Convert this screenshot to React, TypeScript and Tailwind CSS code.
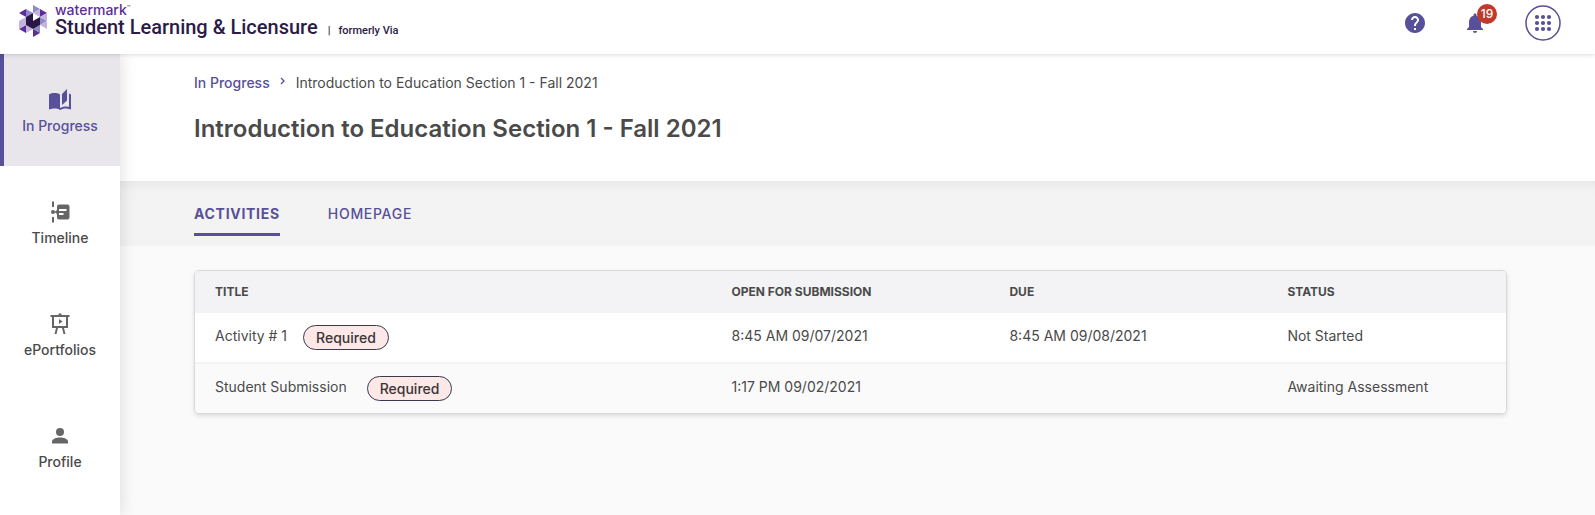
import React from 'react';

type Activity = {
  title: string;
  open: string;
  due: string;
  status: string;
  tagGap: string;
};

const activities: Activity[] = [
  { title: 'Activity # 1', open: '8:45 AM 09/07/2021', due: '8:45 AM 09/08/2021', status: 'Not Started', tagGap: 'gap-4' },
  { title: 'Student Submission', open: '1:17 PM 09/02/2021', due: '', status: 'Awaiting Assessment', tagGap: 'gap-5' },
];

const BookIcon = () => (
  <svg className="w-6 h-6" viewBox="0 0 24 24" fill="currentColor" aria-hidden="true">
    <path d="M12 6.5C10.5 5.4 8.5 5 6.5 5 4.6 5 2.4 5.4 1 6.5v14.6c0 .3.3.5.5.5.1 0 .15-.05.25-.05C3.1 20.9 5.05 20.5 6.5 20.5c1.95 0 4.05.4 5.5 1.5 1.35-.85 3.8-1.5 5.5-1.5 1.65 0 3.35.3 4.75 1.05.1.05.15.05.25.05.25 0 .5-.25.5-.5V6.5c-.6-.45-1.25-.75-2-1V19c-1.1-.35-2.3-.5-3.5-.5-1.7 0-4.15.65-5.5 1.5z" />
    <path d="M19 1l-5 5v11l5-4.5z" />
  </svg>
);

const TimelineIcon = () => (
  <svg className="w-6 h-6" viewBox="1 0 24 24" fill="currentColor" aria-hidden="true">
    <path d="M5 1.5h2v5.5H5zM5 17h2v5.5H5z" />
    <circle cx="6" cy="12" r="2" />
    <path d="M20.5 4.5H12a2 2 0 0 0-2 2V10l-2.5 2L10 14v3.5a2 2 0 0 0 2 2h8.5a2 2 0 0 0 2-2v-11a2 2 0 0 0-2-2zM16.5 15H12v-2h4.5zM19.5 11H12V9h7.5z" />
  </svg>
);

const BoardIcon = () => (
  <svg className="w-6 h-6" viewBox="0 0 24 24" fill="currentColor" aria-hidden="true">
    <path fillRule="evenodd" d="M10.3 3a1.7 1.7 0 0 1 3.4 0h7.8v2H20v11H4V5H2.5V3zM6 5v9h12V5z" />
    <path d="M11 7l3.5 2.5L11 12zM8 16h2l-1.5 6h-2zM14 16h2l1.5 6h-2z" />
  </svg>
);

const PersonIcon = () => (
  <svg className="w-6 h-6" viewBox="0 0 24 24" fill="currentColor" aria-hidden="true">
    <circle cx="12" cy="8" r="4" />
    <path d="M4 19.5v-2C4 15 8.5 13.5 12 13.5s8 1.5 8 4v2z" />
  </svg>
);

const navItems = [
  { label: 'In Progress', icon: <BookIcon />, active: true },
  { label: 'Timeline', icon: <TimelineIcon />, active: false },
  { label: 'ePortfolios', icon: <BoardIcon />, active: false },
  { label: 'Profile', icon: <PersonIcon />, active: false },
];

const LogoMark = () => (
  <svg className="w-7 h-8 shrink-0" viewBox="0 0 84 96" aria-hidden="true">
    <path fill="#8c8bc8" d="M42 0L63 12 42 24zM21 12L42 24 21 36zM63 36L84 48 63 60zM42 72L63 60V84z" />
    <path fill="#5b2d99" d="M0 24L21 12V36zM63 12L84 24 63 36zM0 72L21 60V84zM42 72L63 84 42 96z" />
    <path fill="#c5b3de" d="M42 24L63 12V36zM21 36V60L0 48zM0 48L21 60 0 72zM84 24V48L63 36zM84 48V72L63 60zM21 60L42 72 21 84z" />
    <path fill="#2a1746" d="M21 36L42 24V48L63 36V60L42 72 21 60z" />
  </svg>
);

const Header = () => (
  <header className="relative z-20 flex h-[54px] justify-between bg-white pl-[19px] pr-[34px] shadow-[0_1px_4px_rgba(0,0,0,0.15)]">
    <a href="#home" className="flex items-start gap-2 pt-[5px] text-[#2c1a47] font-[Roboto,sans-serif]">
      <LogoMark />
      <div className="flex flex-col">
        <span className="flex text-sm leading-[10px] font-medium text-[#5b2d99] font-[Inter,sans-serif]">
          watermark<span className="text-[6px] leading-[6px]">™</span>
        </span>
        <span className="flex items-baseline text-xl leading-6 font-medium">
          Student Learning &amp; Licensure
          <span className="ml-[10px] text-[11px]">|</span>
          <span className="ml-2 text-[11px]">formerly Via</span>
        </span>
      </div>
    </a>
    <div className="flex items-center pb-2 text-[#585098]">
      <button type="button" aria-label="Help">
        <svg className="w-6 h-6" viewBox="0 0 24 24" fill="currentColor">
          <path d="M12 2C6.48 2 2 6.48 2 12s4.48 10 10 10 10-4.48 10-10S17.52 2 12 2zm1 17h-2v-2h2v2zm2.07-7.75l-.9.92C13.45 12.9 13 13.5 13 15h-2v-.5c0-1.1.45-2.1 1.17-2.83l1.24-1.26c.37-.36.59-.86.59-1.41 0-1.1-.9-2-2-2s-2 .9-2 2H8c0-2.21 1.79-4 4-4s4 1.79 4 4c0 .88-.36 1.68-.93 2.25z" />
        </svg>
      </button>
      <button type="button" aria-label="Notifications" className="relative ml-9">
        <svg className="w-6 h-6" viewBox="0 0 24 24" fill="currentColor">
          <path d="M12 22c1.1 0 2-.9 2-2h-4c0 1.1.89 2 2 2zm6-6v-5c0-3.07-1.64-5.64-4.5-6.32V4c0-.83-.67-1.5-1.5-1.5s-1.5.67-1.5 1.5v.68C7.63 5.36 6 7.92 6 11v5l-2 2v1h16v-1l-2-2z" />
        </svg>
        <span className="absolute -top-[7px] left-3.5 flex h-5 w-5 items-center justify-center rounded-full bg-[#c0392b] text-xs font-medium text-white">
          19
        </span>
      </button>
      <button type="button" aria-label="Applications" className="ml-[38px]">
        <svg className="w-9 h-9" viewBox="0 0 36 36" fill="currentColor">
          <circle cx="18" cy="18" r="17" fill="none" stroke="currentColor" strokeWidth="1.5" />
          {[12, 18, 24].map((cy) => [12, 18, 24].map((cx) => <circle key={`${cx}-${cy}`} cx={cx} cy={cy} r="2.1" />))}
        </svg>
      </button>
    </div>
  </header>
);

const Sidebar = () => (
  <nav className="relative z-10 w-[120px] shrink-0 bg-white shadow-[0_0_16px_rgba(0,0,0,0.14)]">
    {navItems.map((item) => (
      <a
        key={item.label}
        href="#nav"
        className={
          item.active
            ? 'flex h-28 flex-col items-center justify-center gap-1 border-l-4 border-[#585098] bg-[#e8e6eb] pt-1 pr-1 text-sm font-medium text-[#585098]'
            : 'flex h-28 flex-col items-center justify-center gap-1 pt-1 text-sm font-medium text-[#666666]'
        }
      >
        {item.icon}
        <span className={item.active ? '' : 'text-[#4a4a4a]'}>{item.label}</span>
      </a>
    ))}
  </nav>
);

const ActivityTable = () => (
  <div className="overflow-hidden rounded-[5px] border border-[#d9d9d9] bg-white shadow-[0_2px_4px_rgba(0,0,0,0.12)]">
    <table className="w-full table-fixed text-left text-sm text-[#4a4a4a]">
      <thead className="bg-[#f3f3f5] text-xs">
        <tr className="h-[42px]">
          <th className="w-[39.4%] px-5 font-bold">TITLE</th>
          <th className="w-[21.2%] px-5 font-bold">OPEN FOR SUBMISSION</th>
          <th className="w-[21.2%] px-5 font-bold">DUE</th>
          <th className="px-5 font-bold">STATUS</th>
        </tr>
      </thead>
      <tbody>
        {activities.map((row) => (
          <tr key={row.title} className="h-[50px] border-b-2 border-[#f3f3f3] last:border-b-0 even:bg-[#fafafa]">
            <td className="px-5">
              <div className={`flex items-center ${row.tagGap}`}>
                <span className="pb-1">{row.title}</span>
                <span className="rounded-full border border-[#3b3950] bg-[#fce8e6] px-3 leading-[23px] font-medium text-[#3b3538]">
                  Required
                </span>
              </div>
            </td>
            <td className="px-5 pb-1">{row.open}</td>
            <td className="px-5 pb-1">{row.due}</td>
            <td className="px-5 pb-1">{row.status}</td>
          </tr>
        ))}
      </tbody>
    </table>
  </div>
);

const App: React.FC = () => {
  return (
    <div className="flex min-h-screen flex-col bg-[#fafafa] font-[Inter,sans-serif]">
      <Header />
      <div className="flex grow">
        <Sidebar />
        <main className="min-w-0 grow">
          {/* Page heading */}
          <section className="bg-white pt-[19px] pb-9 pl-[74px]">
            <div className="flex text-sm leading-5 text-[#4a4a4a]">
              <a href="#progress" className="font-medium text-[#585098]">In Progress</a>
              <svg className="mx-2 mt-0.5 w-2.5 h-3" viewBox="0 0 10 12" fill="none" stroke="#585098" strokeWidth="1.3" aria-hidden="true">
                <path d="M3 3l3 3-3 3" />
              </svg>
              <span>Introduction to Education Section 1 - Fall 2021</span>
            </div>
            <h1 className="mt-5 text-2xl leading-8 font-semibold text-[#4a4a4a]">
              Introduction to Education Section 1 - Fall 2021
            </h1>
          </section>

          {/* Tabs */}
          <div role="tablist" className="flex h-[65px] gap-12 bg-[#f3f3f3] pt-[23px] pl-[74px] text-sm leading-5 tracking-wider text-[#585098] shadow-[inset_0_12px_12px_-8px_rgba(0,0,0,0.05)]">
            <button type="button" role="tab" aria-selected="true" className="h-8 border-b-3 border-[#585098] pb-[9px] font-bold">
              ACTIVITIES
            </button>
            <button type="button" role="tab" aria-selected="false" className="h-8 border-b-3 border-transparent pb-[9px] font-medium">
              HOMEPAGE
            </button>
          </div>

          <section className="pt-6 pl-[74px] pr-[88px]">
            <ActivityTable />
          </section>
        </main>
      </div>
    </div>
  );
};

export default App;
